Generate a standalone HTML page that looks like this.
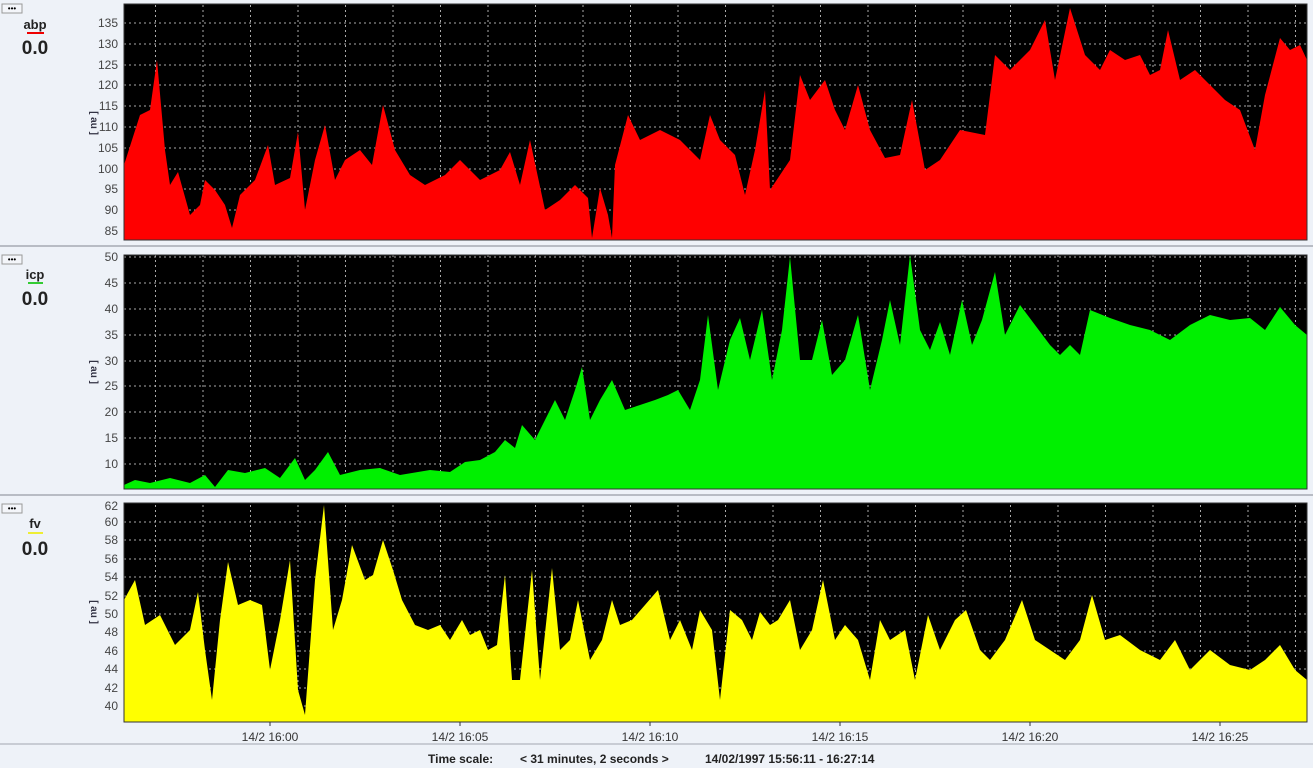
<!DOCTYPE html>
<html><head><meta charset="utf-8"><style>
html,body{margin:0;padding:0;background:#eef2f8;width:1313px;height:768px;overflow:hidden;font-family:"Liberation Sans",sans-serif}
</style></head><body>
<svg width="1313" height="768" xmlns="http://www.w3.org/2000/svg" style="position:absolute;left:0;top:0" font-family="Liberation Sans, sans-serif">
<defs>
<pattern id="vg" x="155" y="0" width="47.5" height="768" patternUnits="userSpaceOnUse">
<line x1="0.5" y1="0" x2="0.5" y2="768" stroke="#aaa" stroke-width="1" stroke-dasharray="2,3"/>
</pattern>
</defs>
<rect width="1313" height="768" fill="#eef2f8"/>
<!-- separators -->
<line x1="0" y1="246" x2="1313" y2="246" stroke="#b8bcc4" stroke-width="2"/>
<line x1="0" y1="495" x2="1313" y2="495" stroke="#b8bcc4" stroke-width="2"/>
<line x1="0" y1="744" x2="1313" y2="744" stroke="#c8ccd4" stroke-width="2"/>

<!-- Panel 1 -->
<rect x="124" y="4" width="1183" height="236" fill="#000"/>
<rect x="124" y="4" width="1183" height="236" fill="url(#vg)"/>
<g stroke="#aaa" stroke-dasharray="2,3">
<line x1="124" x2="1307" y1="23" y2="23"/><line x1="124" x2="1307" y1="44" y2="44"/><line x1="124" x2="1307" y1="65" y2="65"/><line x1="124" x2="1307" y1="85" y2="85"/><line x1="124" x2="1307" y1="106" y2="106"/><line x1="124" x2="1307" y1="127" y2="127"/><line x1="124" x2="1307" y1="148" y2="148"/><line x1="124" x2="1307" y1="169" y2="169"/><line x1="124" x2="1307" y1="189" y2="189"/><line x1="124" x2="1307" y1="210" y2="210"/><line x1="124" x2="1307" y1="231" y2="231"/>
</g>
<polygon fill="#ff0000" points="124,165 140,115 150,110 157,60 165,150 170,185 178,172 190,215 200,205 205,180 215,190 225,205 232,228 240,195 255,180 268,145 275,185 290,178 298,132 305,210 315,160 325,125 335,180 345,160 360,150 372,165 383,105 395,150 410,175 425,185 445,175 460,160 480,180 500,170 510,152 520,185 530,140 545,210 560,200 575,185 588,198 592,238 600,188 608,215 612,238 615,165 628,115 640,140 660,130 680,140 700,160 710,115 720,140 735,155 745,195 755,150 765,90 770,190 790,160 800,75 810,100 825,80 835,110 845,130 858,85 870,130 885,158 900,155 912,100 925,170 940,160 960,130 985,135 995,55 1010,70 1030,50 1045,20 1055,80 1070,8 1085,55 1100,70 1110,50 1125,60 1140,55 1150,75 1160,70 1168,30 1180,80 1195,70 1210,85 1225,100 1240,110 1255,150 1265,95 1280,38 1290,50 1300,45 1307,60 1307,240 124,240"/>
<rect x="124" y="4" width="1183" height="236" fill="none" stroke="#333"/>
<g font-size="12" fill="#444" text-anchor="end">
<text x="118" y="27">135</text><text x="118" y="48">130</text><text x="118" y="69">125</text><text x="118" y="89">120</text><text x="118" y="110">115</text><text x="118" y="131">110</text><text x="118" y="152">105</text><text x="118" y="173">100</text><text x="118" y="193">95</text><text x="118" y="214">90</text><text x="118" y="235">85</text>
</g>
<text transform="translate(91,123) rotate(90)" font-size="10" fill="#334" font-weight="bold" text-anchor="middle">[ au ]</text>
<rect x="2" y="4" width="20" height="9" fill="#f4f6fa" stroke="#999"/><text x="12" y="11" font-size="8" text-anchor="middle">•••</text>
<text x="35" y="29" font-size="13" font-weight="bold" text-anchor="middle" fill="#222">abp</text>
<line x1="27" y1="33" x2="44" y2="33" stroke="#e00" stroke-width="2"/>
<text x="35" y="54" font-size="19" font-weight="bold" text-anchor="middle" fill="#222">0.0</text>

<!-- Panel 2 -->
<rect x="124" y="255" width="1183" height="234" fill="#000"/>
<rect x="124" y="255" width="1183" height="234" fill="url(#vg)"/>
<g stroke="#aaa" stroke-dasharray="2,3">
<line x1="124" x2="1307" y1="257" y2="257"/><line x1="124" x2="1307" y1="283" y2="283"/><line x1="124" x2="1307" y1="309" y2="309"/><line x1="124" x2="1307" y1="335" y2="335"/><line x1="124" x2="1307" y1="361" y2="361"/><line x1="124" x2="1307" y1="386" y2="386"/><line x1="124" x2="1307" y1="412" y2="412"/><line x1="124" x2="1307" y1="438" y2="438"/><line x1="124" x2="1307" y1="464" y2="464"/>
</g>
<polygon fill="#00f000" points="124,485 135,480 150,483 170,478 190,483 205,475 215,487 228,470 245,473 265,468 280,478 295,458 305,480 315,470 328,452 340,475 360,470 380,468 400,475 430,470 450,472 465,462 480,460 495,452 505,440 515,448 522,425 535,440 545,420 555,400 565,420 575,390 582,367 590,420 600,400 612,380 625,410 640,405 655,400 668,395 678,390 690,410 700,380 708,315 718,390 730,340 740,318 750,360 762,310 772,380 782,330 790,257 800,360 812,360 822,320 832,375 845,360 858,315 870,390 882,340 890,300 900,345 910,255 920,330 930,350 940,322 950,355 962,300 972,345 982,320 995,272 1005,335 1020,305 1035,325 1050,345 1060,355 1070,345 1080,355 1090,310 1110,318 1130,325 1150,330 1170,340 1190,325 1210,315 1230,320 1250,318 1265,330 1280,307 1295,325 1307,335 1307,489 124,489"/>
<rect x="124" y="255" width="1183" height="234" fill="none" stroke="#333"/>
<g font-size="12" fill="#444" text-anchor="end">
<text x="118" y="261">50</text><text x="118" y="287">45</text><text x="118" y="313">40</text><text x="118" y="339">35</text><text x="118" y="365">30</text><text x="118" y="390">25</text><text x="118" y="416">20</text><text x="118" y="442">15</text><text x="118" y="468">10</text>
</g>
<text transform="translate(91,372) rotate(90)" font-size="10" fill="#334" font-weight="bold" text-anchor="middle">[ au ]</text>
<rect x="2" y="255" width="20" height="9" fill="#f4f6fa" stroke="#999"/><text x="12" y="262" font-size="8" text-anchor="middle">•••</text>
<text x="35" y="279" font-size="13" font-weight="bold" text-anchor="middle" fill="#222">icp</text>
<line x1="28" y1="283" x2="43" y2="283" stroke="#3c3" stroke-width="2"/>
<text x="35" y="305" font-size="19" font-weight="bold" text-anchor="middle" fill="#222">0.0</text>

<!-- Panel 3 -->
<rect x="124" y="503" width="1183" height="219" fill="#000"/>
<rect x="124" y="503" width="1183" height="219" fill="url(#vg)"/>
<g stroke="#aaa" stroke-dasharray="2,3">
<line x1="124" x2="1307" y1="522" y2="522"/><line x1="124" x2="1307" y1="540" y2="540"/><line x1="124" x2="1307" y1="559" y2="559"/><line x1="124" x2="1307" y1="577" y2="577"/><line x1="124" x2="1307" y1="596" y2="596"/><line x1="124" x2="1307" y1="614" y2="614"/><line x1="124" x2="1307" y1="632" y2="632"/><line x1="124" x2="1307" y1="651" y2="651"/><line x1="124" x2="1307" y1="669" y2="669"/><line x1="124" x2="1307" y1="688" y2="688"/><line x1="124" x2="1307" y1="706" y2="706"/>
</g>
<polygon fill="#ffff00" points="124,600 135,580 145,625 160,615 175,645 190,630 198,592 205,650 212,700 220,620 228,562 238,605 250,600 262,605 270,670 280,620 290,560 298,690 305,715 315,580 324,505 333,630 342,600 352,545 365,580 373,575 383,540 393,570 402,600 415,625 428,630 440,625 450,640 462,620 470,635 480,630 488,650 497,645 505,575 512,680 520,680 532,570 540,680 552,568 560,650 570,640 578,600 590,660 602,640 612,600 620,625 632,620 645,605 658,590 670,640 680,620 692,650 700,610 712,630 720,700 730,610 742,620 752,640 760,612 770,625 778,620 790,600 800,650 812,630 823,580 835,640 845,625 858,640 870,680 880,620 890,640 905,630 915,680 928,615 940,650 955,620 966,610 980,650 990,660 1005,640 1022,600 1035,640 1050,650 1065,660 1080,640 1092,595 1105,640 1120,635 1140,650 1160,660 1175,640 1190,670 1210,650 1230,665 1250,670 1265,660 1280,645 1295,670 1307,680 1307,722 124,722"/>
<rect x="124" y="503" width="1183" height="219" fill="none" stroke="#333"/>
<g font-size="12" fill="#444" text-anchor="end">
<text x="118" y="510">62</text><text x="118" y="526">60</text><text x="118" y="544">58</text><text x="118" y="563">56</text><text x="118" y="581">54</text><text x="118" y="600">52</text><text x="118" y="618">50</text><text x="118" y="636">48</text><text x="118" y="655">46</text><text x="118" y="673">44</text><text x="118" y="692">42</text><text x="118" y="710">40</text>
</g>
<text transform="translate(91,612) rotate(90)" font-size="10" fill="#334" font-weight="bold" text-anchor="middle">[ au ]</text>
<rect x="2" y="504" width="20" height="9" fill="#f4f6fa" stroke="#999"/><text x="12" y="511" font-size="8" text-anchor="middle">•••</text>
<text x="35" y="528" font-size="13" font-weight="bold" text-anchor="middle" fill="#222">fv</text>
<line x1="28" y1="533" x2="43" y2="533" stroke="#ee3" stroke-width="2"/>
<text x="35" y="555" font-size="19" font-weight="bold" text-anchor="middle" fill="#222">0.0</text>

<!-- x axis -->
<g font-size="12" fill="#333" text-anchor="middle">
<text x="270" y="741">14/2 16:00</text><text x="460" y="741">14/2 16:05</text><text x="650" y="741">14/2 16:10</text><text x="840" y="741">14/2 16:15</text><text x="1030" y="741">14/2 16:20</text><text x="1220" y="741">14/2 16:25</text>
</g>
<g stroke="#333"><line x1="270" y1="722" x2="270" y2="726"/><line x1="460" y1="722" x2="460" y2="726"/><line x1="650" y1="722" x2="650" y2="726"/><line x1="840" y1="722" x2="840" y2="726"/><line x1="1030" y1="722" x2="1030" y2="726"/><line x1="1220" y1="722" x2="1220" y2="726"/></g>
<g font-size="12" font-weight="bold" fill="#222">
<text x="428" y="763">Time scale:</text>
<text x="520" y="763">&lt; 31 minutes, 2 seconds &gt;</text>
<text x="705" y="763">14/02/1997 15:56:11 - 16:27:14</text>
</g>
</svg>
</body></html>
